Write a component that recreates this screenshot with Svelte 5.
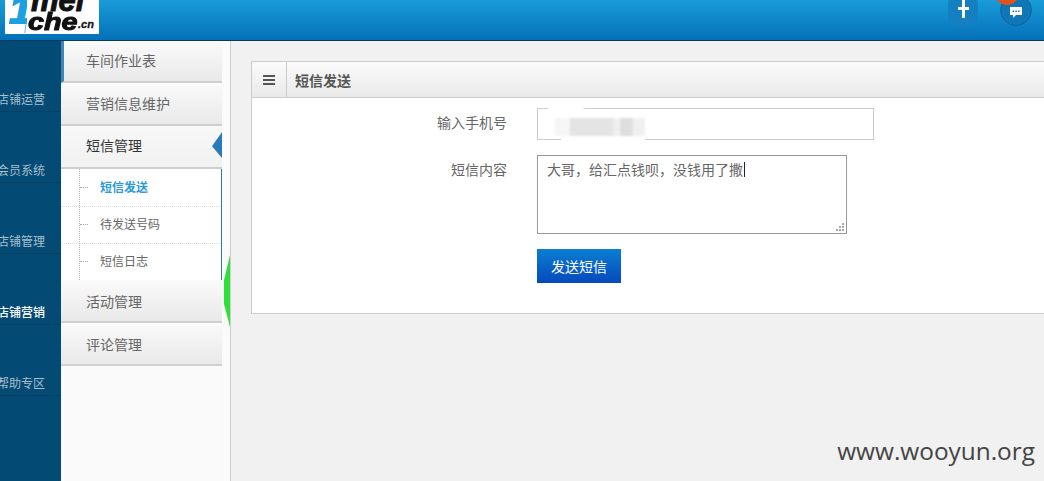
<script lang="ts">
	const rail = [
		{ label: "店铺运营" },
		{ label: "会员系统" },
		{ label: "店铺管理" },
		{ label: "店铺营销", active: true },
		{ label: "帮助专区" }
	]
	const subLinks = [
		{ label: "短信发送", active: true },
		{ label: "待发送号码" },
		{ label: "短信日志" }
	]
</script>

<div class="page">
	<header class="topbar">
		<div class="logo">
			<span class="logo-one">1</span>
			<div class="logo-words">
				<span class="logo-mei">mei</span>
				<div class="logo-line">
					<span class="logo-che">che</span>
					<small>.cn</small>
				</div>
			</div>
		</div>
		<div class="actions">
			<div class="action plus">
				<svg width="11" height="18" viewBox="0 0 11 18"><path d="M4 0h3v7h4v3H7v8H4v-8H0V7h4z" fill="#fff" /></svg>
			</div>
			<div class="action chat">
				<span class="badge"></span>
				<svg width="14" height="14" viewBox="0 0 14 14">
					<path d="M1 2h12v8H7l-3 3v-3H1z" fill="#fff" />
					<path d="M3.500 5.500h1.500v1.500H3.500zM6.300 5.500h1.500v1.500H6.300zM9.100 5.500h1.500v1.500H9.100z" fill="#1478b8" />
				</svg>
			</div>
		</div>
	</header>

	<div class="body">
		<nav class="rail">
			{#each rail as item}
				<div class="rail-item" class:active={item.active}><span>{item.label}</span></div>
			{/each}
		</nav>

		<aside class="side">
			<div class="menu first">车间作业表</div>
			<div class="menu">营销信息维护</div>
			<div class="menu open">短信管理<i class="arrow"></i></div>
			<ul class="sub">
				{#each subLinks as link}
					<li class:active={link.active}>{link.label}</li>
				{/each}
			</ul>
			<div class="menu low">活动管理</div>
			<div class="menu low">评论管理</div>
			<i class="green"></i>
		</aside>

		<main class="content">
			<section class="panel">
				<div class="panel-head">
					<div class="panel-icon">
						<svg width="12" height="10" viewBox="0 0 12 10"><path d="M0 0h12v2H0zM0 4h12v2H0zM0 8h12v2H0z" fill="#555" /></svg>
					</div>
					<h2>短信发送</h2>
				</div>
				<form class="form">
					<div class="row phone-row">
						<label for="phone">输入手机号</label>
						<div class="phone">
							<input id="phone" type="text" />
							<i class="wipe"></i>
							<i class="smudge"></i>
							<i class="blur"></i>
						</div>
					</div>
					<div class="row msg-row">
						<label for="msg">短信内容</label>
						<div class="msg">
							<textarea id="msg">大哥，给汇点钱呗，没钱用了撒</textarea>
							<i class="caret"></i>
							<svg class="grip" width="8" height="8" viewBox="0 0 8 8">
								<path d="M6 0h2v2H6zM3 3h2v2H3zM6 3h2v2H6zM0 6h2v2H0zM3 6h2v2H3zM6 6h2v2H6z" fill="#aaa" />
							</svg>
						</div>
					</div>
					<div class="row">
						<span class="spacer"></span>
						<button type="button" class="send">发送短信</button>
					</div>
				</form>
			</section>
			<div class="watermark">www.wooyun.org</div>
		</main>
	</div>
</div>

<style>
	:global(body) {
		margin: 0;
		overflow: hidden;
	}

	.page {
		width: 1044px;
		height: 481px;
		display: flex;
		flex-direction: column;
		overflow: hidden;
		font-family: "Noto Sans CJK SC", "Liberation Sans", sans-serif;
		font-size: 14px;
		color: #666;
	}

	.topbar {
		height: 40px;
		flex: none;
		display: flex;
		justify-content: space-between;
		background: linear-gradient(#199cd8, #0471b9);
		border-bottom: 1px solid #063a5c;
		overflow: hidden;
	}

	.logo {
		position: relative;
		width: 94px;
		height: 34px;
		margin-left: 5px;
		background: #fff;
		display: flex;
		overflow: hidden;
		font-family: "Liberation Sans", sans-serif;
		font-weight: 700;
		font-style: italic;
		color: #111;
	}
	.logo-one {
		font-size: 42px;
		line-height: 20px;
		height: 24px;
		margin-left: 4px;
		width: 18px;
		color: #1ba0e2;
		-webkit-text-stroke: 2px #1ba0e2;
		overflow: hidden;
	}
	.logo-one::after {
		content: "";
		position: absolute;
		left: 20px;
		top: 22px;
		width: 1px;
		height: 11px;
		background: #58b8e8;
		transform: rotate(8deg);
	}
	.logo-words {
		display: flex;
		flex-direction: column;
		margin-left: 1px;
		-webkit-text-stroke: 1px #111;
	}
	.logo-mei {
		font-size: 31px;
		line-height: 20px;
		height: 20px;
		margin-top: -9px;
		margin-left: 3px;
	}
	.logo-line {
		display: flex;
		margin-top: 1px;
		line-height: 20px;
		height: 20px;
	}
	.logo-che {
		font-size: 24px;
		width: 50px;
		transform: scaleX(1.2);
		transform-origin: left;
	}
	.logo-line small {
		font-size: 11px;
		line-height: 24px;
		-webkit-text-stroke: 0.3px #111;
	}

	.actions {
		display: flex;
		align-items: flex-end;
		padding-right: 12px;
		gap: 22px;
		padding-bottom: 14px;
	}
	.action {
		position: relative;
		width: 32px;
		height: 32px;
		border-radius: 50%;
		display: flex;
		align-items: flex-end;
		justify-content: center;
	}
	.plus {
		width: 30px;
		background: #1480c2;
		border-radius: 10px;
		padding-bottom: 8px;
		box-sizing: border-box;
	}
	.chat {
		background: #1076b8;
		border: 1px solid #0a68a6;
		box-sizing: border-box;
		padding-bottom: 6px;
	}
	.badge {
		position: absolute;
		top: -1px;
		left: -5px;
		width: 22px;
		height: 11px;
		border-radius: 0 0 10px 10px;
		background: #e2521c;
	}

	.body {
		flex: 1;
		display: flex;
		min-height: 0;
	}

	.rail {
		width: 61px;
		flex: none;
		background: #034a74;
		overflow: hidden;
	}
	.rail-item {
		height: 71px;
		box-sizing: border-box;
		border-bottom: 1px solid #07405f;
		display: flex;
		justify-content: flex-end;
		align-items: flex-end;
		padding: 0 16px 2px 0;
		font-size: 12px;
		color: #a9bfcc;
		white-space: nowrap;
	}
	.rail-item span {
		flex: none;
		line-height: 18px;
		padding-bottom: 1px;
	}
	.rail-item.active {
		color: #fff;
		font-weight: 500;
	}

	.side {
		position: relative;
		width: 170px;
		flex: none;
		box-sizing: border-box;
		padding-right: 8px;
		background: #fafafa;
		border-right: 1px solid #ccc;
	}
	.menu {
		position: relative;
		height: 43px;
		box-sizing: border-box;
		padding-left: 25px;
		line-height: 41px;
		background: linear-gradient(#fafafa, #e9e9e9);
		border-bottom: 2px solid #cfcfcf;
		color: #666;
	}
	.menu.first {
		height: 42px;
		border-left: 3px solid #3f85b5;
		padding-left: 22px;
		line-height: 38px;
	}
	.menu.open {
		background: linear-gradient(#f8f8f8, #f1f1f1);
		color: #333;
		line-height: 38px;
	}
	.menu.low {
		line-height: 43px;
	}
	.arrow {
		position: absolute;
		right: 0;
		top: 6px;
		width: 10px;
		height: 26px;
		background: #2b7ab8;
		clip-path: polygon(100% 0, 0 55%, 100% 100%);
	}

	.sub {
		list-style: none;
		margin: 0;
		padding: 1px 0 0;
		height: 111px;
		box-sizing: border-box;
		background: #fff;
		border-right: 1px solid #2b7ab0;
		position: relative;
		font-size: 12px;
	}
	.sub::before {
		content: "";
		position: absolute;
		left: 18px;
		top: 0;
		bottom: 0;
		border-left: 1px dotted #b5b5b5;
	}
	.sub li {
		position: relative;
		height: 37px;
		box-sizing: border-box;
		padding-left: 39px;
		line-height: 33px;
		border-bottom: 1px dotted #ddd;
		color: #666;
	}
	.sub li:last-child {
		border-bottom: 0;
	}
	.sub li::before {
		content: "";
		position: absolute;
		left: 19px;
		top: 17px;
		width: 8px;
		border-top: 1px dotted #aaa;
	}
	.sub li.active {
		color: #2a9bd8;
		font-weight: 700;
	}

	.green {
		position: absolute;
		right: 0;
		top: 214px;
		width: 6px;
		height: 72px;
		background: #2fe03a;
		clip-path: polygon(100% 0, 100% 100%, 0 68%, 0 35%);
	}

	.content {
		position: relative;
		flex: 1;
		min-width: 0;
		background: #f1f1f1;
		padding: 20px 0 0 20px;
	}

	.panel {
		width: 830px;
		height: 253px;
		box-sizing: border-box;
		background: #fff;
		border: 1px solid #ccc;
	}
	.panel-head {
		height: 35px;
		display: flex;
		align-items: center;
		background: linear-gradient(#fbfbfb, #e9e9e9);
		border-bottom: 1px solid #ccc;
	}
	.panel-icon {
		width: 34px;
		height: 100%;
		display: flex;
		align-items: center;
		justify-content: center;
		border-right: 1px solid #ccc;
	}
	.panel-head h2 {
		margin: 0 0 0 8px;
		font-size: 14px;
		font-weight: 700;
		color: #555;
	}

	.form {
		padding-top: 10px;
	}
	.row {
		display: flex;
		gap: 30px;
	}
	.row label,
	.spacer {
		width: 255px;
		flex: none;
		text-align: right;
		color: #666;
		line-height: 28px;
	}
	.phone-row {
		margin-bottom: 15px;
	}
	.msg-row {
		margin-bottom: 15px;
	}
	.phone {
		position: relative;
	}
	.phone input {
		display: block;
		width: 337px;
		height: 32px;
		box-sizing: border-box;
		border: 1px solid #ccc;
		background: #fff;
		outline: 0;
	}
	.wipe {
		position: absolute;
		left: 24px;
		bottom: -2px;
		width: 84px;
		height: 5px;
		background: #fff;
	}
	.smudge {
		position: absolute;
		left: 8px;
		top: -6px;
		width: 42px;
		height: 30px;
		border-radius: 50%;
		background: #fff;
		box-shadow: 0 0 3px #fff;
	}
	.blur {
		position: absolute;
		left: 18px;
		top: 10px;
		width: 90px;
		height: 18px;
		background: linear-gradient(90deg, #f6f6f6 0 16%, #e4e4e4 17% 64%, #efefef 65% 72%, #dedede 73% 86%, #f0f0f0 87%);
		filter: blur(1px);
	}
	.msg {
		position: relative;
		height: 79px;
	}
	.msg textarea {
		display: block;
		width: 310px;
		height: 79px;
		box-sizing: border-box;
		padding: 3px 9px;
		border: 1px solid #999;
		font: inherit;
		line-height: 20px;
		color: #666;
		outline: 0;
		border-radius: 0;
		resize: none;
	}
	.caret {
		position: absolute;
		left: 207px;
		top: 7px;
		width: 1px;
		height: 15px;
		background: #222;
	}
	.grip {
		position: absolute;
		right: 3px;
		bottom: 3px;
	}
	.send {
		width: 84px;
		height: 34px;
		border: 0;
		padding: 0;
		background: linear-gradient(#0a7fd0, #0649bd);
		color: #fff;
		font: inherit;
	}

	.watermark {
		position: absolute;
		right: 9px;
		bottom: 12px;
		font-family: "Open Sans", sans-serif;
		font-size: 24.4px;
		line-height: 36px;
		color: #444;
	}
</style>
